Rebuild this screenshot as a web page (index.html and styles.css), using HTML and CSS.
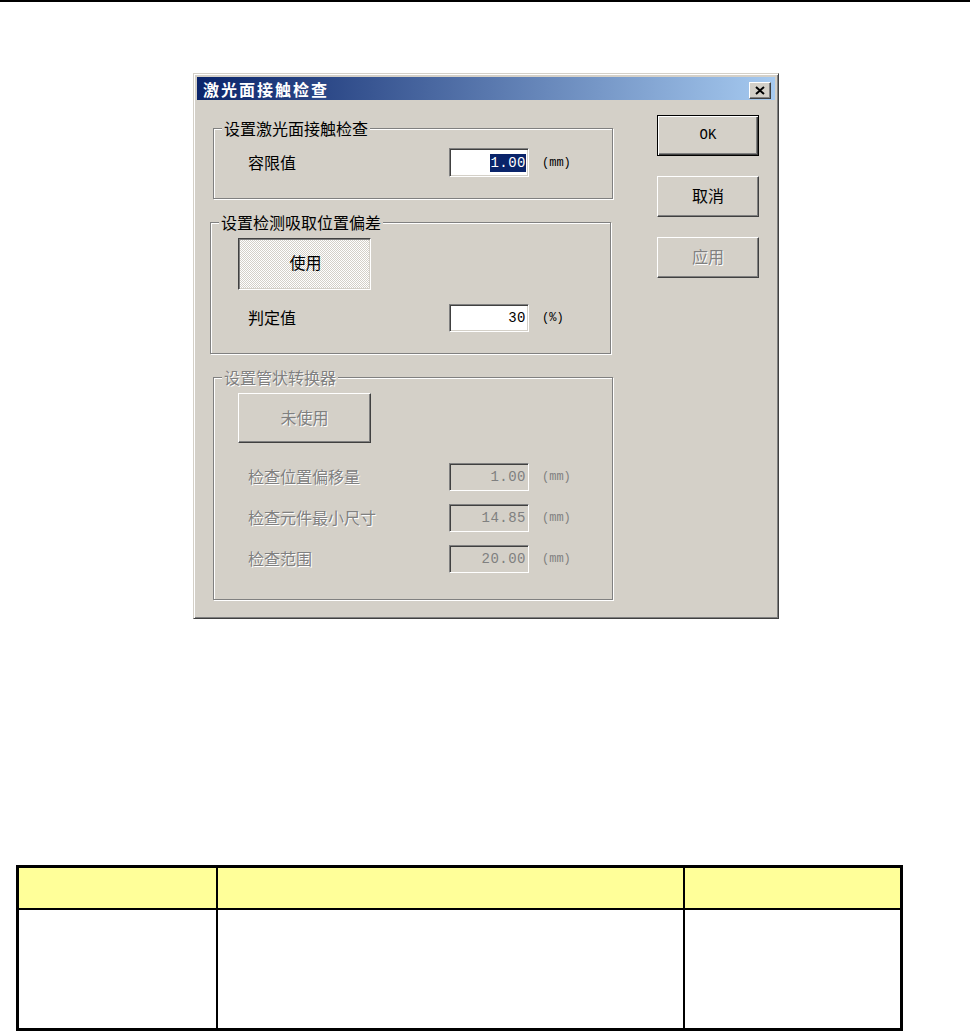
FILE: index.html
```html
<!DOCTYPE html>
<html lang="zh-CN">
<head>
    <meta charset="UTF-8">
    <meta name="viewport" content="width=device-width, initial-scale=1.0">
    <title>激光面接触检查</title>
    <link rel="stylesheet" href="styles.css">
</head>
<body>
<div class="topline"></div>

<div class="dialog">
    <div class="titlebar">
        <span class="title">激光面接触检查</span>
        <span class="close-btn">
            <svg width="10" height="9" viewBox="0 0 10 9">
                <path d="M1 1 L9 8 M9 1 L1 8" stroke="#000" stroke-width="2" fill="none"/>
            </svg>
        </span>
    </div>
    <div class="dialog-body">
        <div class="groups">
            <div class="group group-tolerance">
                <span class="group-title">设置激光面接触检查</span>
                <div class="row">
                    <span class="row-label">容限值</span>
                    <span class="field"><span class="selected">1.00</span></span>
                    <span class="unit">(mm)</span>
                </div>
            </div>

            <div class="group group-offset">
                <span class="group-title">设置检测吸取位置偏差</span>
                <button class="state-btn pressed">使用</button>
                <div class="row row-first">
                    <span class="row-label">判定值</span>
                    <span class="field">30</span>
                    <span class="unit">(%)</span>
                </div>
            </div>

            <div class="group group-tube disabled">
                <span class="group-title">设置管状转换器</span>
                <button class="state-btn">未使用</button>
                <div class="row row-first">
                    <span class="row-label">检查位置偏移量</span>
                    <span class="field">1.00</span>
                    <span class="unit">(mm)</span>
                </div>
                <div class="row">
                    <span class="row-label">检查元件最小尺寸</span>
                    <span class="field">14.85</span>
                    <span class="unit">(mm)</span>
                </div>
                <div class="row">
                    <span class="row-label">检查范围</span>
                    <span class="field">20.00</span>
                    <span class="unit">(mm)</span>
                </div>
            </div>
        </div>

        <div class="actions">
            <button class="btn btn-default">OK</button>
            <button class="btn">取消</button>
            <button class="btn btn-disabled">应用</button>
        </div>
    </div>
</div>

<table class="grid">
    <thead>
    <tr class="head-row">
        <th class="col-a"></th>
        <th class="col-b"></th>
        <th class="col-c"></th>
    </tr>
    </thead>
    <tbody>
    <tr class="body-row">
        <td class="col-a"></td>
        <td class="col-b"></td>
        <td class="col-c"></td>
    </tr>
    </tbody>
</table>
</body>
</html>
```

FILE: styles.css
```css
body {
  margin: 0;
  background-color: #fff;
  font-family: "Noto Sans CJK SC", sans-serif;
  color: #000;
}

.topline {
  height: 2px;
  background-color: #000;
}

/* classic window frame */
.dialog {
  width: 586px;
  height: 546px;
  margin: 71px 0 0 193px;
  box-sizing: border-box;
  background-color: #d4d0c8;
  border: 1px solid;
  border-color: #d4d0c8 #404040 #404040 #d4d0c8;
  box-shadow: inset 1px 1px #fff, inset -1px -1px #808080;
  padding: 3px;
}

.titlebar {
  height: 23px;
  display: flex;
  align-items: center;
  justify-content: space-between;
  padding: 0 4px 0 6px;
  background: linear-gradient(to right, #0a246a, #a6caf0);
}

.title {
  color: #fff;
  font-weight: bold;
  font-size: 16px;
  letter-spacing: 2px;
  line-height: 20px;
}

.close-btn {
  width: 22px;
  height: 17px;
  margin-top: 3px;
  box-sizing: border-box;
  display: flex;
  align-items: center;
  justify-content: center;
  background-color: #d4d0c8;
  border: 1px solid;
  border-color: #fff #404040 #404040 #fff;
  box-shadow: inset -1px -1px #808080;
}

.dialog-body {
  display: flex;
}

.groups {
  width: 404px;
  padding-left: 13px;
}

/* etched group box */
.group {
  position: relative;
  box-sizing: border-box;
  width: 400px;
  border: 1px solid #808080;
  box-shadow: inset 1px 1px #fff, 1px 1px #fff;
}

.group-title {
  position: absolute;
  top: -11px;
  left: 8px;
  padding: 0 2px;
  background-color: #d4d0c8;
  font-size: 16px;
  line-height: 20px;
  white-space: nowrap;
}

.group-tolerance {
  margin: 28px 0 0 3px;
  height: 71px;
  padding: 19px 0 0 34px;
}

.group-offset {
  margin-top: 23px;
  width: 401px;
  height: 132px;
  padding: 15px 0 0 37px;
}

.group-tube {
  margin: 23px 0 0 3px;
  height: 223px;
  padding: 15px 0 0 34px;
}

.row {
  display: flex;
  align-items: center;
  height: 28px;
  margin-top: 13px;
}

.group-tolerance .row {
  margin-top: 0;
  height: 29px;
}

.group-offset .row-first {
  margin-top: 14px;
}

.group-tube .row-first {
  margin-top: 20px;
}

.row-label {
  width: 201px;
  font-size: 16px;
  line-height: 20px;
  padding-bottom: 2px;
  white-space: nowrap;
}

.field {
  width: 80px;
  height: 100%;
  box-sizing: border-box;
  display: flex;
  align-items: center;
  justify-content: flex-end;
  padding-right: 2px;
  background-color: #fff;
  border: 1px solid;
  border-color: #808080 #fff #fff #808080;
  box-shadow: inset 1px 1px #404040, inset -1px -1px #d4d0c8;
  font-family: "Liberation Mono", monospace;
  font-size: 14px;
  letter-spacing: 0.5px;
}

.selected {
  background-color: #0a246a;
  color: #fff;
  line-height: 18px;
}

.unit {
  margin-left: 13px;
  font-family: "Liberation Mono", monospace;
  font-size: 12px;
}

.state-btn {
  display: block;
  width: 133px;
  height: 50px;
  margin-left: -10px;
  padding: 0 0 2px;
  box-sizing: border-box;
  background-color: #d4d0c8;
  border: 1px solid;
  border-color: #fff #404040 #404040 #fff;
  box-shadow: inset -1px -1px #808080;
  font-family: "Noto Sans CJK SC", sans-serif;
  font-size: 16px;
  color: #000;
}

.state-btn.pressed {
  height: 52px;
  padding: 0 0 4px 2px;
  border-color: #404040 #fff #fff #404040;
  box-shadow: inset 1px 1px #808080, inset -1px -1px #d4d0c8;
  background-image: repeating-conic-gradient(#fff 0 25%, #d4d0c8 0 50%);
  background-size: 2px 2px;
}

/* greyed-out group */
.disabled .group-title,
.disabled .row-label,
.disabled .state-btn,
.btn-disabled {
  color: #808080;
  text-shadow: 1px 1px #fff;
}

.disabled .field {
  background-color: #d4d0c8;
  color: #808080;
}

.disabled .unit {
  color: #808080;
}

.actions {
  margin-left: 43px;
  padding-top: 15px;
  display: flex;
  flex-direction: column;
  gap: 20px;
}

.btn {
  width: 102px;
  height: 41px;
  padding: 0 0 4px;
  box-sizing: border-box;
  background-color: #d4d0c8;
  border: 1px solid;
  border-color: #fff #404040 #404040 #fff;
  box-shadow: inset -1px -1px #808080;
  font-family: "Noto Sans CJK SC", sans-serif;
  font-size: 16px;
  color: #000;
}

.btn-default {
  padding-bottom: 2px;
  border-color: #000;
  box-shadow: inset 1px 1px #fff, inset -1px -1px #404040, inset -2px -2px #808080;
  font-family: "Liberation Mono", monospace;
  font-size: 14px;
}

.btn-disabled {
  color: #808080;
}

.grid {
  margin: 246px 0 0 16px;
  width: 887px;
  border: 3px solid #000;
  border-spacing: 0;
  table-layout: fixed;
}

.grid th,
.grid td {
  padding: 0;
  box-sizing: border-box;
  border-right: 2px solid #000;
}

.grid th {
  background-color: #ffff99;
  border-bottom: 2px solid #000;
}

.grid .col-a {
  width: 199px;
}

.grid .col-b {
  width: 467px;
}

.grid .col-c {
  border-right: none;
}

.head-row {
  height: 42px;
}

.body-row {
  height: 118px;
}
```
